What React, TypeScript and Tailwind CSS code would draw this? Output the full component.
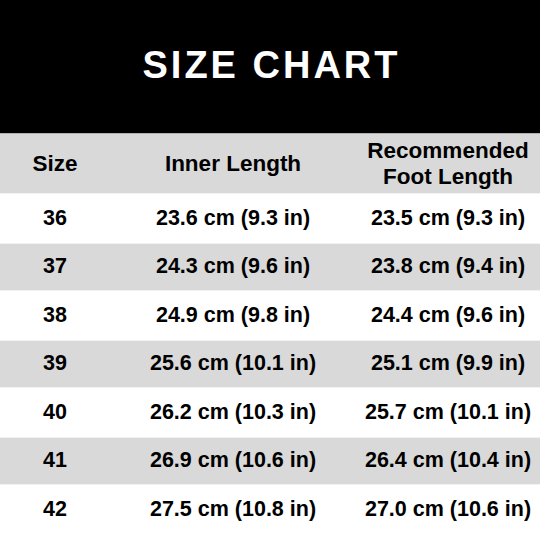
export default function App() {
  const rows = [
    ["36", "23.6 cm (9.3 in)", "23.5 cm (9.3 in)"],
    ["37", "24.3 cm (9.6 in)", "23.8 cm (9.4 in)"],
    ["38", "24.9 cm (9.8 in)", "24.4 cm (9.6 in)"],
    ["39", "25.6 cm (10.1 in)", "25.1 cm (9.9 in)"],
    ["40", "26.2 cm (10.3 in)", "25.7 cm (10.1 in)"],
    ["41", "26.9 cm (10.6 in)", "26.4 cm (10.4 in)"],
    ["42", "27.5 cm (10.8 in)", "27.0 cm (10.6 in)"],
  ];
  const heights = ["h-[50px]", "h-[47px]", "h-[50px]", "h-[47px]", "h-[50px]", "h-[47px]", "h-[56px]"];
  return (
    <div
      className="w-[540px] h-[540px] bg-white flex flex-col overflow-hidden text-black"
      style={{ fontFamily: '"Liberation Sans", Arial, sans-serif' }}
    >
      <div className="h-[133px] bg-black flex items-center justify-center pb-[4px]">
        <h1 className="text-white font-bold text-[38px] tracking-[3px] leading-none pl-[3px]">SIZE CHART</h1>
      </div>
      <div className="h-[60px] bg-[#d9d9d9] border-t border-[#b0b0b0] grid grid-cols-[110px_246px_1fr] items-center text-center font-bold text-[22.5px] leading-[26px]">
        <div>Size</div>
        <div>Inner Length</div>
        <div>
          Recommended
          <br />
          Foot Length
        </div>
      </div>
      {rows.map((r, i) => (
        <div
          key={r[0]}
          className={`${heights[i]} ${i % 2 === 1 ? "bg-[#d9d9d9]" : "bg-white"} border-t border-[#f2f2f2] grid grid-cols-[110px_246px_1fr] items-center text-center font-bold text-[21.5px] leading-none ${i === 6 ? "pb-[6px]" : ""}`}
        >
          <div>{r[0]}</div>
          <div>{r[1]}</div>
          <div>{r[2]}</div>
        </div>
      ))}
    </div>
  );
}
